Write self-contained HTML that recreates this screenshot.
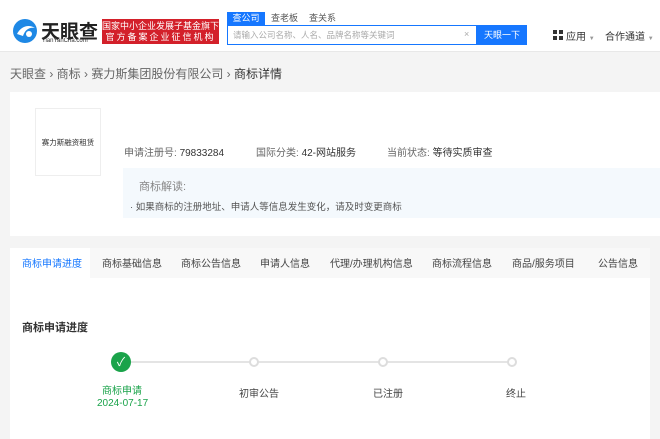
<!DOCTYPE html>
<html><head><meta charset="utf-8"><style>
*{margin:0;padding:0;box-sizing:border-box}
body{width:660px;height:439px;overflow:hidden;background:#f4f4f4;font-family:"Liberation Sans","Noto Sans CJK SC",sans-serif;position:relative;color:#333}
.a{position:absolute;white-space:nowrap}
</style></head><body>
<div class="a" style="left:0;top:0;width:660px;height:52px;background:#fff;border-bottom:1px solid #e8e8e8"></div>
<svg class="a" style="left:11px;top:18px" width="28" height="26" viewBox="0 0 28 26"><circle cx="14" cy="13" r="12" fill="#1e88e5"/><path d="M6 16c4-8 12-10 18-6-6-1-10 2-12 8z" fill="#fff"/><circle cx="18" cy="16" r="3" fill="#fff"/></svg>
<div class="a" style="left:41px;top:17px;font-size:19px;font-weight:bold;color:#222">天眼查</div>
<div class="a" style="left:42px;top:38px;font-size:6px;color:#333">TianYanCha.com</div>
<div class="a" style="left:102px;top:19px;width:117px;height:25px;background:#d3202a;color:#fff;font-size:9px;line-height:11px;text-align:center;padding-top:2px">国家中小企业发展子基金旗下<br><span style="letter-spacing:2px">官方备案企业征信机构</span></div>
<div class="a" style="left:227px;top:12px;width:38px;height:13px;background:#1677ff;color:#fff;font-size:9px;text-align:center;line-height:13px">查公司</div>
<div class="a" style="left:271px;top:12px;font-size:9px;color:#555;line-height:13px">查老板</div>
<div class="a" style="left:309px;top:12px;font-size:9px;color:#555;line-height:13px">查关系</div>
<div class="a" style="left:227px;top:25px;width:250px;height:20px;border:1px solid #1677ff;background:#fff"></div>
<div class="a" style="left:233px;top:29px;font-size:8.5px;color:#aaa">请输入公司名称、人名、品牌名称等关键词</div>
<div class="a" style="left:464px;top:29px;font-size:9px;color:#aaa">×</div>
<div class="a" style="left:477px;top:25px;width:50px;height:20px;background:#1677ff;color:#fff;font-size:9px;text-align:center;line-height:20px">天眼一下</div>
<div class="a" style="left:553px;top:30px;width:10px;height:10px;background:linear-gradient(#333,#333) 0 0/4px 4px no-repeat,linear-gradient(#333,#333) 6px 0/4px 4px no-repeat,linear-gradient(#333,#333) 0 6px/4px 4px no-repeat,linear-gradient(#333,#333) 6px 6px/4px 4px no-repeat"></div>
<div class="a" style="left:566px;top:28px;font-size:10px;color:#333">应用 <span style="font-size:6px;color:#999">▼</span></div>
<div class="a" style="left:605px;top:28px;font-size:10px;color:#333">合作通道 <span style="font-size:6px;color:#999">▼</span></div>
<div class="a" style="left:10px;top:65px;font-size:12px;color:#666">天眼查 › 商标 › 赛力斯集团股份有限公司 › <span style="color:#333">商标详情</span></div>
<div class="a" style="left:10px;top:92px;width:650px;height:144px;background:#fff"></div>
<div class="a" style="left:35px;top:108px;width:66px;height:68px;border:1px solid #eee;font-size:7.5px;line-height:68px;text-align:center;color:#333">赛力斯融资租赁</div>
<div class="a" style="left:124px;top:144px;font-size:10px;color:#666">申请注册号: <span style="color:#333">79833284</span></div>
<div class="a" style="left:256px;top:144px;font-size:10px;color:#666">国际分类: <span style="color:#333">42-网站服务</span></div>
<div class="a" style="left:387px;top:144px;font-size:10px;color:#666">当前状态: <span style="color:#333">等待实质审查</span></div>
<div class="a" style="left:123px;top:168px;width:537px;height:50px;background:#f4f9fd"></div>
<div class="a" style="left:139px;top:178px;font-size:11px;color:#888">商标解读:</div>
<div class="a" style="left:130px;top:199px;font-size:9.5px;color:#555">· 如果商标的注册地址、申请人等信息发生变化，请及时变更商标</div>
<div class="a" style="left:10px;top:248px;width:640px;height:191px;background:#fff"></div>
<div class="a" style="left:10px;top:248px;width:640px;height:30px;background:#f8f8f8"></div>
<div class="a" style="left:10px;top:248px;width:80px;height:30px;background:#fff"></div>
<div class="a" style="left:0;top:255px;width:660px;font-size:10px;color:#444">
<span class="a" style="left:22px;color:#1677ff">商标申请进度</span><span class="a" style="left:102px">商标基础信息</span><span class="a" style="left:181px">商标公告信息</span><span class="a" style="left:260px">申请人信息</span><span class="a" style="left:330px">代理/办理机构信息</span><span class="a" style="left:432px">商标流程信息</span><span class="a" style="left:512px">商品/服务项目</span><span class="a" style="left:598px">公告信息</span></div>
<div class="a" style="left:22px;top:319px;font-size:11px;font-weight:bold;color:#333">商标申请进度</div>
<div class="a" style="left:121px;top:361px;width:391px;height:2px;background:#e4e4e4"></div>
<div class="a" style="left:111px;top:352px;width:20px;height:20px;border-radius:50%;background:#1aa34a;color:#fff;font-size:12px;text-align:center;line-height:20px">✓</div>
<div class="a" style="left:249px;top:357px;width:10px;height:10px;border-radius:50%;border:2px solid #ddd;background:#fff"></div>
<div class="a" style="left:378px;top:357px;width:10px;height:10px;border-radius:50%;border:2px solid #ddd;background:#fff"></div>
<div class="a" style="left:507px;top:357px;width:10px;height:10px;border-radius:50%;border:2px solid #ddd;background:#fff"></div>
<div class="a" style="left:102px;top:382px;font-size:10px;color:#1aa34a">商标申请</div>
<div class="a" style="left:97px;top:398px;font-size:10px;color:#1aa34a">2024-07-17</div>
<div class="a" style="left:239px;top:385px;font-size:10px;color:#444">初审公告</div>
<div class="a" style="left:373px;top:385px;font-size:10px;color:#444">已注册</div>
<div class="a" style="left:506px;top:385px;font-size:10px;color:#444">终止</div>
</body></html>
